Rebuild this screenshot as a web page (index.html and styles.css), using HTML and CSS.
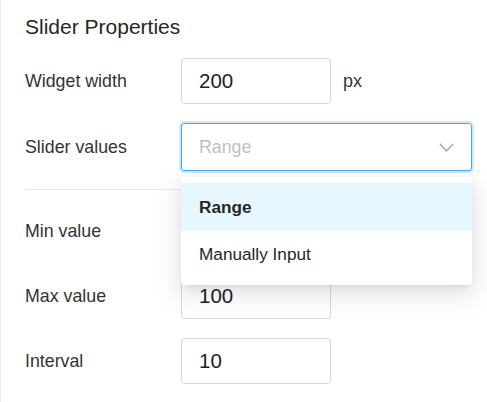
FILE: index.html
```html
<!DOCTYPE html>
<html>
<head>
<meta charset="utf-8">
<link rel="stylesheet" href="styles.css">
</head>
<body>
<div class="panel">
  <div class="title">Slider Properties</div>
  <div class="rows">
    <div class="row">
      <div class="label">Widget width</div>
      <div class="control">
        <div class="input">200</div>
        <span class="unit">px</span>
      </div>
    </div>
    <div class="row">
      <div class="label">Slider values</div>
      <div class="control">
        <div class="select-wrap">
          <div class="select">
            <span class="placeholder">Range</span>
            <svg class="chevron" width="15" height="9" viewBox="0 0 15 9"><polyline points="0.8,0.8 7.5,8 14.2,0.8" fill="none" stroke="#a6a6a6" stroke-width="1.4"/></svg>
          </div>
          <div class="dropdown">
            <div class="option active">Range</div>
            <div class="option">Manually Input</div>
          </div>
        </div>
      </div>
    </div>
  </div>
  <div class="divider"></div>
  <div class="rows">
    <div class="row">
      <div class="label">Min value</div>
      <div class="control"><div class="input">0</div></div>
    </div>
    <div class="row">
      <div class="label">Max value</div>
      <div class="control"><div class="input">100</div></div>
    </div>
    <div class="row">
      <div class="label">Interval</div>
      <div class="control"><div class="input">10</div></div>
    </div>
  </div>
</div>
</body>
</html>
```

FILE: styles.css
```css
html, body {
  margin: 0;
  padding: 0;
  background: #fff;
}
body {
  font-family: "Liberation Sans", Arial, sans-serif;
  color: #333;
}
.panel {
  border-left: 1px solid #eeeeee;
  min-height: 402px;
  box-sizing: border-box;
  padding: 13px 15px 0 24px;
}
.title {
  font-size: 21px;
  line-height: 28px;
  color: #262626;
  margin-bottom: 17px;
}
.rows {
  display: flex;
  flex-direction: column;
  gap: 19px;
}
.row {
  display: flex;
  align-items: center;
}
.label {
  width: 156px;
  font-size: 17.8px;
  color: #333;
}
.control {
  display: flex;
  align-items: center;
}
.input {
  width: 150px;
  height: 46px;
  box-sizing: border-box;
  border: 1px solid #d9d9d9;
  border-radius: 3px;
  padding-left: 17px;
  display: flex;
  align-items: center;
  font-size: 20.5px;
  color: #222;
}
.unit {
  margin-left: 12px;
  font-size: 18px;
  color: #333;
}
.select-wrap {
  position: relative;
  width: 291px;
}
.select {
  height: 48px;
  box-sizing: border-box;
  border: 1px solid #40a9ff;
  border-radius: 3px;
  box-shadow: 0 0 0 2px rgba(24, 144, 255, 0.2);
  padding: 0 17px 0 17px;
  display: flex;
  align-items: center;
  justify-content: space-between;
}
.placeholder {
  font-size: 17.8px;
  color: #bfbfbf;
}
.chevron {
  display: block;
}
.dropdown {
  position: absolute;
  top: 54px;
  left: 0;
  width: 100%;
  background: #fff;
  border-radius: 4px;
  padding: 6px 0 7px;
  box-shadow: 0 6px 16px 0 rgba(0, 0, 0, 0.08), 0 3px 6px -4px rgba(0, 0, 0, 0.12), 0 9px 28px 8px rgba(0, 0, 0, 0.05);
  z-index: 10;
}
.option {
  height: 48px;
  display: flex;
  align-items: center;
  padding-left: 18px;
  font-size: 17.2px;
  color: #262626;
}
.option.active {
  background: #e6f7ff;
  font-weight: bold;
}
.option + .option {
  height: 47px;
}
.divider {
  height: 1px;
  background: #e8e8e8;
  margin: 18px 0 18px 1px;
  width: 447px;
}
```
